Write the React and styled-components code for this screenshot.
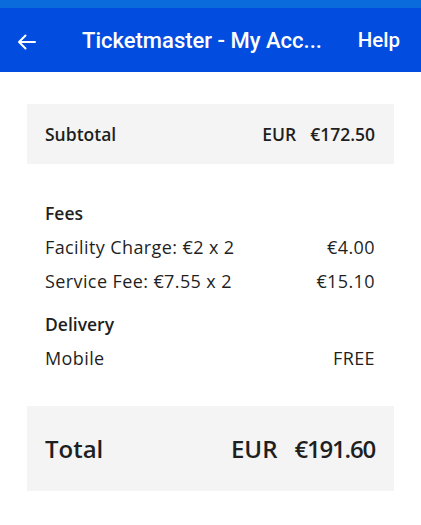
import React from 'react'
import styled, { createGlobalStyle } from 'styled-components'

const GlobalStyle = createGlobalStyle`
    body {
        margin: 0;
        background: #fff;
        font-family: "Open Sans", "Noto Sans", sans-serif;
        color: #1f1f1f;
    }
`;

const StatusBar = styled.div`
    height: 8px;
    background: #0a6cdc;
`;

const AppBar = styled.header`
    height: 64px;
    background: #024ddf;
    display: flex;
    align-items: center;
    padding: 0 21px 0 16px;
    color: #fff;
    font-family: Roboto, sans-serif;
    font-weight: 500;
    font-size: 20.5px;
`;

const BackButton = styled.div`
    width: 20px;
    height: 20px;
    display: flex;
    align-items: center;
    justify-content: center;
    margin-top: 3px;
`;

const Title = styled.div`
    flex: 1;
    margin-left: 46px;
    font-size: 22px;
    white-space: nowrap;
`;

const Content = styled.main`
    padding: 32px 27px 0;
`;

const SummaryBox = styled.div`
    background: #f4f4f4;
    height: ${p => p.$big ? 85 : 60}px;
    display: flex;
    align-items: center;
    justify-content: space-between;
    padding: 0 19px 0 18px;
    font-weight: 600;
    font-size: ${p => p.$big ? 24 : 17.5}px;
    margin-top: ${p => p.$gap || 0}px;
`;

const Amount = styled.div`
    display: flex;
    gap: ${p => p.$big ? 17 : 14}px;
`;

const Price = styled.span`
    letter-spacing: ${p => p.$big ? -1.2 : 0}px;
`;

const Section = styled.section`
    padding: 0 19px 0 18px;
    margin-top: ${p => p.$gap}px;
`;

const Label = styled.div`
    font-weight: 600;
    font-size: 17.5px;
    line-height: 34px;
`;

const Row = styled.div`
    display: flex;
    justify-content: space-between;
    font-size: 18px;
    letter-spacing: 0.4px;
    line-height: 34px;
`;

export default function App() {
    return (
        <>
            <GlobalStyle />
            <StatusBar />
            <AppBar>
                <BackButton>
                    <svg width="19" height="16" viewBox="0 0 19 16" fill="none" stroke="#fff" strokeWidth="2" strokeLinecap="round" strokeLinejoin="round">
                        <path d="M18 8H2M8.5 1.5L2 8L8.5 14.5" />
                    </svg>
                </BackButton>
                <Title>Ticketmaster - My Acc...</Title>
                <div>Help</div>
            </AppBar>
            <Content>
                <SummaryBox>
                    <span>Subtotal</span>
                    <Amount><span>EUR</span><Price>€172.50</Price></Amount>
                </SummaryBox>
                <Section $gap={32}>
                    <Label>Fees</Label>
                    <Row><span>Facility Charge: €2 x 2</span><span>€4.00</span></Row>
                    <Row><span>Service Fee: €7.55 x 2</span><span>€15.10</span></Row>
                </Section>
                <Section $gap={9}>
                    <Label>Delivery</Label>
                    <Row><span>Mobile</span><span>FREE</span></Row>
                </Section>
                <SummaryBox $big $gap={31}>
                    <span>Total</span>
                    <Amount $big><span>EUR</span><Price $big>€191.60</Price></Amount>
                </SummaryBox>
            </Content>
        </>
    )
}
